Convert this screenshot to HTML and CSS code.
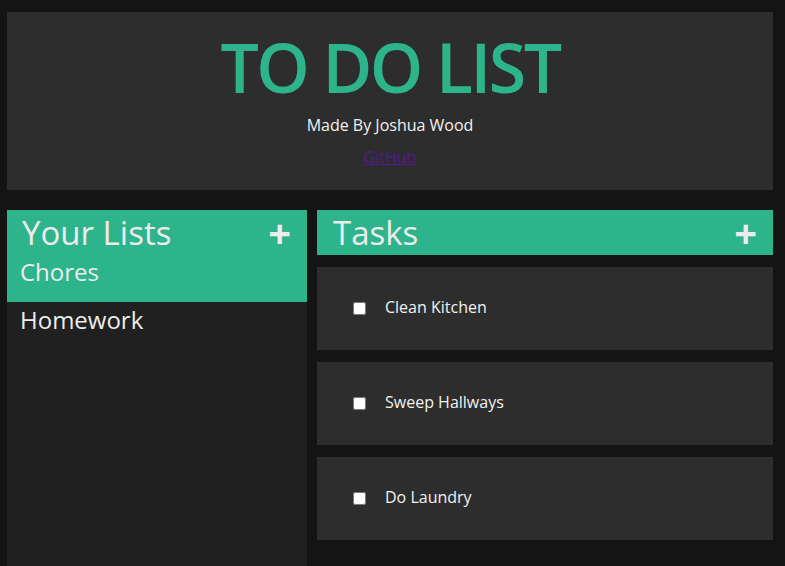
FILE: index.html
```html
<!DOCTYPE html>
<html lang="en">
<head>
<meta charset="utf-8">
<title>To Do List</title>
<link rel="stylesheet" href="styles.css">
</head>
<body>
<header class="hero">
  <h1 class="hero-title">TO DO LIST</h1>
  <p class="hero-author">Made By Joshua Wood</p>
  <a class="hero-link" href="#">GitHub</a>
</header>
<main class="board">
  <aside class="lists">
    <div class="lists-head">
      <div class="panel-bar">
        <h2 class="panel-title">Your Lists</h2>
        <span class="panel-add">+</span>
      </div>
      <div class="list-item active">Chores</div>
    </div>
    <div class="list-item">Homework</div>
  </aside>
  <section class="tasks">
    <div class="panel-bar tasks-bar">
      <h2 class="panel-title">Tasks</h2>
      <span class="panel-add">+</span>
    </div>
    <label class="task"><input type="checkbox"><span class="task-name">Clean Kitchen</span></label>
    <label class="task"><input type="checkbox"><span class="task-name">Sweep Hallways</span></label>
    <label class="task"><input type="checkbox"><span class="task-name">Do Laundry</span></label>
  </section>
</main>
</body>
</html>
```
FILE: styles.css
```css
html, body {
  margin: 0;
  padding: 0;
}
body {
  background: #141414;
  font-family: "Open Sans", "Liberation Sans", sans-serif;
  color: #ececec;
  padding: 12px 12px 0 7px;
  min-height: 100vh;
  box-sizing: border-box;
  display: flex;
  flex-direction: column;
  overflow: hidden;
}
.hero {
  background: #2d2d2d;
  height: 178px;
  box-sizing: border-box;
  display: flex;
  flex-direction: column;
  align-items: center;
  padding-top: 15px;
}
.hero-title {
  margin: 0;
  font-size: 68px;
  font-weight: 600;
  line-height: 80px;
  color: #2eb48b;
  letter-spacing: -2.5px;
}
.hero-author {
  margin: 7px 0 0;
  font-size: 16px;
  font-weight: 500;
  line-height: 22px;
  color: #f2f2f2;
}
.hero-link {
  margin-top: 10px;
  font-size: 16px;
  line-height: 22px;
  color: #551a8b;
}
.board {
  margin-top: 20px;
  flex: 1;
  display: flex;
  gap: 10px;
}
.lists {
  width: 300px;
  background: #202020;
}
.lists-head {
  background: #2eb48b;
}
.panel-bar {
  display: flex;
  align-items: center;
  justify-content: space-between;
  height: 45px;
  padding: 0 16px 0 15px;
}
.panel-title {
  margin: 0;
  font-size: 33px;
  font-weight: 400;
  line-height: 45px;
}
.panel-add {
  font-size: 40px;
  font-weight: 700;
  line-height: 45px;
}
.list-item {
  font-size: 24px;
  line-height: 32px;
  padding: 0 12px 10px 13px;
}
.list-item.active {
  padding-top: 1px;
  padding-bottom: 14px;
}
.lists .list-item:not(.active) {
  padding-top: 2px;
}
.tasks {
  flex: 1;
  display: flex;
  flex-direction: column;
  gap: 12px;
}
.tasks-bar {
  background: #2eb48b;
  padding: 0 16px;
}
.task {
  background: #2d2d2d;
  height: 83px;
  display: flex;
  align-items: center;
  padding-left: 32px;
  font-size: 16px;
  font-weight: 500;
  color: #f2f2f2;
}
.task input {
  margin: 1px 19px 1px 4px;
}
.task-name {
  padding-bottom: 4px;
}
```
